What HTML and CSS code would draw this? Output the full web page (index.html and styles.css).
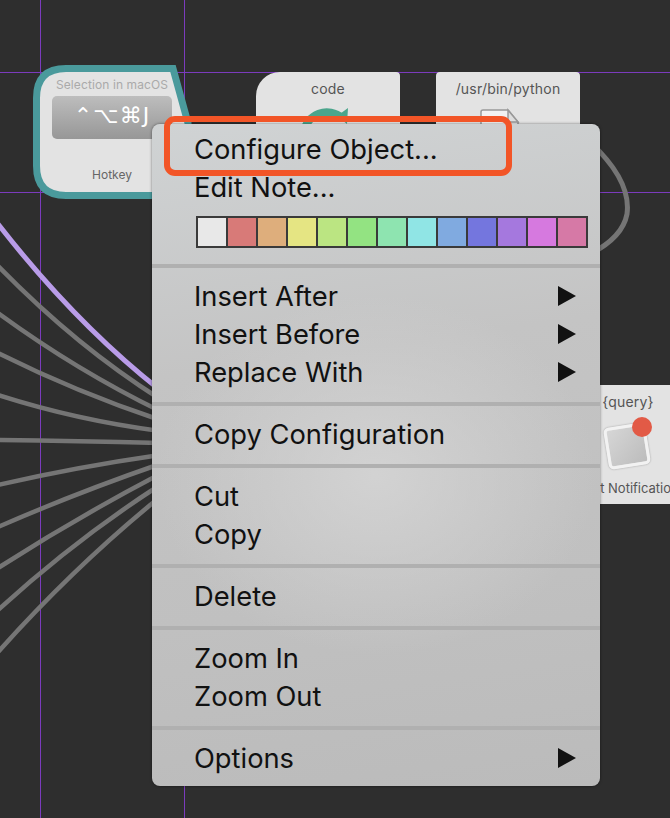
FILE: index.html
```html
<!DOCTYPE html>
<html lang="en">

<head>
    <meta charset="UTF-8">
    <meta name="viewport" content="width=device-width, initial-scale=1.0">
    <title>Workflow Editor</title>
    <link rel="stylesheet" href="styles.css">
</head>

<body>
    <div class="canvas">
        <div class="guide guide-h guide-top"></div>
        <div class="guide guide-h guide-mid"></div>
        <div class="guide guide-v guide-left"></div>
        <div class="guide guide-v guide-right"></div>

        <svg class="wires" viewBox="0 0 670 818" aria-hidden="true">
            <path class="wire" d="M-2 266 Q76 346 160 399"/>
            <path class="wire" d="M-2 313 Q76 370 160 411"/>
            <path class="wire" d="M-2 353 Q76 392 160 420"/>
            <path class="wire" d="M-2 395 Q76 420 160 431"/>
            <path class="wire" d="M-2 440 Q76 441 160 443"/>
            <path class="wire" d="M-2 485 Q76 467 160 455"/>
            <path class="wire" d="M-2 527 Q76 493 160 464"/>
            <path class="wire" d="M-2 568 Q76 518 160 474"/>
            <path class="wire" d="M-2 610 Q76 539 160 485"/>
            <path class="wire" d="M-2 652 Q76 565 160 497"/>
            <path class="wire wire-active" d="M-2 224 Q76 324 160 390"/>
            <path class="wire wire-loop" d="M590 142 C618 168 630 192 627 214 C624 230 612 243 590 254"/>
        </svg>

        <div class="node node-hotkey">
            <svg class="node-outline" viewBox="0 0 160 134" aria-hidden="true">
                <path d="M33 3.5 H140 L155 58 V130.5 H33 Q3.5 130.5 3.5 101 V33 Q3.5 3.5 33 3.5 Z"/>
            </svg>
            <p class="node-top">Selection in macOS</p>
            <div class="keys">⌃⌥⌘J</div>
            <p class="node-label">Hotkey</p>
        </div>

        <div class="node node-code">
            <p class="node-title">code</p>
            <svg class="node-icon" viewBox="0 0 60 30" aria-hidden="true">
                <path d="M6 28 A23 23 0 0 1 44 14" fill="none" stroke="#4ba58c" stroke-width="8"/>
                <path d="M39 12 L50 4 L49 20 Z" fill="#4ba58c"/>
            </svg>
        </div>

        <div class="node node-script">
            <p class="node-title">/usr/bin/python</p>
            <svg class="node-icon" viewBox="0 0 60 30" aria-hidden="true">
                <path d="M3 30 V8 Q3 6 5 6 H30 L40 18 V30 Z" fill="#f2f2f2" stroke="#999" stroke-width="1.5"/>
                <path d="M30 6 V18 H40 Z" fill="#ddd" stroke="#999" stroke-width="1.5"/>
            </svg>
        </div>

        <div class="node node-notify">
            <p class="node-title">{query}</p>
            <div class="notify-icon">
                <div class="notify-box"></div>
                <div class="notify-dot"></div>
            </div>
            <p class="node-label">Post Notification</p>
        </div>

        <div class="menu">
            <div class="menu-item">Configure Object...</div>
            <div class="menu-item">Edit Note...</div>
            <div class="swatches">
                <span class="swatch swatch-white"></span>
                <span class="swatch swatch-red"></span>
                <span class="swatch swatch-orange"></span>
                <span class="swatch swatch-yellow"></span>
                <span class="swatch swatch-lime"></span>
                <span class="swatch swatch-green"></span>
                <span class="swatch swatch-mint"></span>
                <span class="swatch swatch-cyan"></span>
                <span class="swatch swatch-sky"></span>
                <span class="swatch swatch-blue"></span>
                <span class="swatch swatch-purple"></span>
                <span class="swatch swatch-pink"></span>
                <span class="swatch swatch-rose"></span>
            </div>
            <div class="menu-sep"></div>
            <div class="menu-item has-sub">Insert After</div>
            <div class="menu-item has-sub">Insert Before</div>
            <div class="menu-item has-sub">Replace With</div>
            <div class="menu-sep"></div>
            <div class="menu-item">Copy Configuration</div>
            <div class="menu-sep"></div>
            <div class="menu-item">Cut</div>
            <div class="menu-item">Copy</div>
            <div class="menu-sep"></div>
            <div class="menu-item">Delete</div>
            <div class="menu-sep"></div>
            <div class="menu-item">Zoom In</div>
            <div class="menu-item">Zoom Out</div>
            <div class="menu-sep"></div>
            <div class="menu-item has-sub">Options</div>
        </div>

        <div class="highlight"></div>
    </div>
</body>

</html>
```

FILE: styles.css
```css
html, body {
    margin: 0;
    padding: 0;
    height: 100%;
    overflow: hidden;
    background: #2e2e2e;
    font-family: Inter, 'Liberation Sans', sans-serif;
}

.canvas {
    position: relative;
    width: 670px;
    height: 818px;
    overflow: hidden;
}

.guide {
    position: absolute;
    background: #7b3bbd;
}

.guide-h {
    left: 0;
    width: 670px;
    height: 1px;
}

.guide-v {
    top: 0;
    width: 1px;
    height: 818px;
}

.guide-top { top: 72px; }
.guide-mid { top: 192px; }
.guide-left { left: 40px; }
.guide-right { left: 184px; }

.wires {
    position: absolute;
    left: 0;
    top: 0;
    width: 670px;
    height: 818px;
}

.wire {
    fill: none;
    stroke: #757575;
    stroke-width: 4.5;
}

.wire-active {
    stroke: #b99ce8;
    stroke-width: 5;
}

.wire-loop {
    stroke-width: 5;
}

.node {
    position: absolute;
    background: #e3e3e3;
    text-align: center;
    color: #555;
    font-size: 12px;
}

.node p {
    margin: 0;
}

.node-hotkey {
    left: 33px;
    top: 65px;
    width: 160px;
    height: 134px;
    background: none;
}

.node-outline {
    position: absolute;
    left: 0;
    top: 0;
    width: 160px;
    height: 134px;
}

.node-outline path {
    fill: #e3e3e3;
    stroke: #4a9a9c;
    stroke-width: 7;
}

.node-top {
    position: relative;
    padding-top: 13px;
    width: 158px;
    font-size: 12px;
    line-height: 14px;
    letter-spacing: 0.1px;
    color: #aaa;
}

.keys {
    position: relative;
    margin: 4px 0 0 19px;
    width: 120px;
    height: 43px;
    border-radius: 5px;
    background: linear-gradient(#bdbdbd, #979797);
    color: #fff;
    font-family: 'DejaVu Sans', sans-serif;
    font-size: 22px;
    line-height: 40px;
    letter-spacing: 1px;
}

.node-hotkey .node-label {
    position: relative;
    width: 158px;
    margin-top: 29px;
    line-height: 14px;
    color: #666;
}

.node-code {
    left: 256px;
    top: 72px;
    width: 144px;
    height: 80px;
    border-radius: 24px 4px 0 0;
}

.node-script {
    left: 436px;
    top: 72px;
    width: 144px;
    height: 80px;
    border-radius: 4px;
}

.node-title {
    padding-top: 9px;
    line-height: 15px;
    font-size: 14px;
    letter-spacing: 0.2px;
}

.node-icon {
    display: block;
    margin: 8px auto 0;
    width: 60px;
    height: 30px;
}

.node-notify {
    left: 556px;
    top: 385px;
    width: 144px;
    height: 119px;
}

.notify-icon {
    position: relative;
    margin: 8px auto 0;
    width: 48px;
    height: 61px;
    padding-top: 8px;
    box-sizing: border-box;
}

.notify-box {
    width: 42px;
    height: 42px;
    margin-left: 2px;
    border: 3px solid #f2f2f2;
    border-radius: 5px;
    background: linear-gradient(135deg, #d6d6d6, #bcbcbc);
    box-shadow: 0 0 2px rgba(0, 0, 0, 0.35);
    transform: rotate(-9deg);
    box-sizing: border-box;
}

.notify-dot {
    position: absolute;
    right: 0;
    top: 0;
    width: 20px;
    height: 20px;
    border-radius: 50%;
    background: #e25a46;
}

.node-notify .node-label {
    margin-top: 3px;
    line-height: 14px;
    font-size: 13px;
}

.menu {
    position: absolute;
    left: 152px;
    top: 124px;
    width: 448px;
    box-sizing: border-box;
    padding: 6px 0 9px;
    border-radius: 8px;
    background:
        radial-gradient(ellipse 220px 180px at 50% 53%, rgba(212, 212, 212, 0.9), rgba(212, 212, 212, 0)),
        linear-gradient(172deg, #d0d3d4 0%, #c4c4c4 35%, #c0c0c0 70%, #bbbbbb 100%);
    box-shadow: 0 0 3px rgba(0, 0, 0, 0.5);
    color: #111;
}

.menu-item {
    position: relative;
    top: 1px;
    padding-left: 42px;
    height: 38px;
    font-size: 27.3px;
    line-height: 38px;
}

.has-sub::after {
    content: "";
    position: absolute;
    right: 24px;
    top: 8px;
    width: 18px;
    height: 20px;
    background: #111;
    clip-path: polygon(0 0, 100% 50%, 0 100%);
}

.swatches {
    display: grid;
    grid-template-columns: repeat(13, 28px);
    gap: 2px;
    width: max-content;
    margin: 10px 0 16px 44px;
    padding: 2px;
    background: #3a3a3a;
}

.swatch {
    height: 28px;
}

.swatch-white { background: #e8e8e8; }
.swatch-red { background: #d87a78; }
.swatch-orange { background: #deae7c; }
.swatch-yellow { background: #e5e583; }
.swatch-lime { background: #bbe582; }
.swatch-green { background: #93e382; }
.swatch-mint { background: #8ee4b0; }
.swatch-cyan { background: #90e5e5; }
.swatch-sky { background: #80aae0; }
.swatch-blue { background: #7476de; }
.swatch-purple { background: #a578de; }
.swatch-pink { background: #d679df; }
.swatch-rose { background: #d679a6; }

.menu-sep {
    height: 4px;
    margin: 11px 0 9px;
    background: #b0b0b0;
}

.highlight {
    position: absolute;
    left: 164px;
    top: 116px;
    width: 348px;
    height: 60px;
    box-sizing: border-box;
    border: 6px solid #f25527;
    border-radius: 11px;
}
```
